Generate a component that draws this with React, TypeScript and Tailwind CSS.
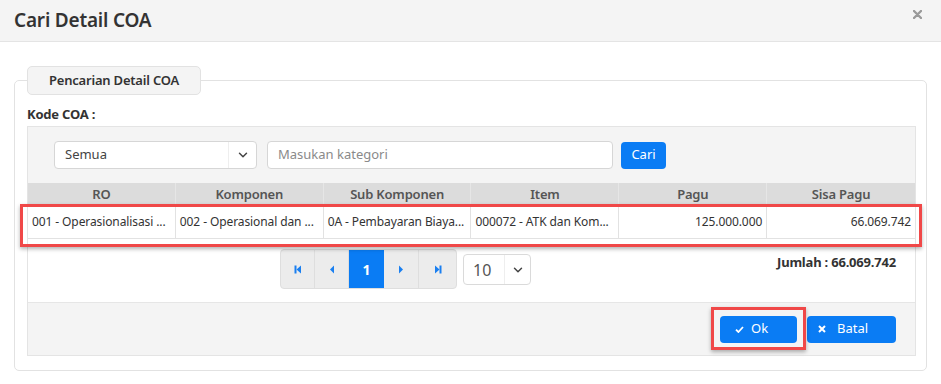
import { ChevronDown } from "lucide-react";

const columns = ["RO", "Komponen", "Sub Komponen", "Item", "Pagu", "Sisa Pagu"];

const row = [
  { text: "001 - Operasionalisasi ...", right: false },
  { text: "002 - Operasional dan ...", right: false },
  { text: "0A - Pembayaran Biaya...", right: false },
  { text: "000072 - ATK dan Kom...", right: false },
  { text: "125.000.000", right: true },
  { text: "66.069.742", right: true },
];

function PagerIcon({ kind }: { kind: "first" | "prev" | "next" | "last" }) {
  return (
    <svg width="8" height="9" viewBox="0 0 8 9" fill="#1a7ff0">
      {kind === "first" && (
        <>
          <rect x="0.5" y="0.5" width="2" height="8" />
          <path d="M7 0.5 L2.5 4.5 L7 8.5 Z" />
        </>
      )}
      {kind === "prev" && <path d="M6 0.5 L2 4.5 L6 8.5 Z" />}
      {kind === "next" && <path d="M2 0.5 L6 4.5 L2 8.5 Z" />}
      {kind === "last" && (
        <>
          <path d="M1 0.5 L5.5 4.5 L1 8.5 Z" />
          <rect x="5.5" y="0.5" width="2" height="8" />
        </>
      )}
    </svg>
  );
}

export default function App() {
  return (
    <div
      className="relative w-[941px] h-[384px] overflow-hidden bg-white text-[#333]"
      style={{ fontFamily: '"Noto Sans", "Open Sans", sans-serif' }}
    >
      {/* header */}
      <div className="h-[42px] bg-[#f4f4f4] border-b border-[#e4e4e4] flex items-center justify-between pl-[14px] pr-[19px]">
        <h1 className="text-[19px] font-semibold text-[#333] tracking-[-0.2px]">Cari Detail COA</h1>
        <svg width="9" height="9" viewBox="0 0 9 9" className="mt-[-12px]">
          <path d="M1 1 L8 8 M8 1 L1 8" stroke="#9a9a9a" strokeWidth="2.4" strokeLinecap="round" />
        </svg>
      </div>

      {/* body */}
      <div className="pt-[24px] px-[14px]">
        <fieldset className="border border-[#e2e2e2] rounded-[5px] pl-[12px] pr-[10px] pb-[14px]">
          <legend className="h-[29px] w-[174px] flex items-center justify-center bg-[#f4f4f4] border border-[#e2e2e2] rounded-[5px] text-[13px] font-semibold text-[#333] tracking-[-0.2px]">
            Pencarian Detail COA
          </legend>
          <div className="text-[13px] font-bold leading-[18px] mt-[10px] mb-[3px] tracking-[-0.2px]">Kode COA :</div>

          <div className="border border-[#e4e4e4] bg-[#f4f4f4]">
            {/* filter */}
            <div className="flex items-center pl-[26px] pt-[14px] pb-[14px]">
              <div className="w-[203px] h-[28px] bg-white border border-[#d6d6d6] rounded-[4px] flex items-center">
                <span className="flex-1 pl-[10px] text-[13px] text-[#444]">Semua</span>
                <span className="w-[28px] h-full border-l border-[#eeeeee] flex items-center justify-center">
                  <ChevronDown size={14} strokeWidth={2.5} color="#444" />
                </span>
              </div>
              <div className="ml-[10px] w-[346px] h-[28px] bg-white border border-[#d6d6d6] rounded-[4px] flex items-center pl-[10px] text-[13px] text-[#8a8a8a]">
                Masukan kategori
              </div>
              <button className="ml-[8px] w-[45px] h-[27px] bg-[#0a7cf4] rounded-[4px] text-white text-[13px]">Cari</button>
            </div>

            {/* table */}
            <div className="grid grid-cols-6 bg-[#dcdcdc] h-[23px]">
              {columns.map((c) => (
                <div
                  key={c}
                  className="flex items-center justify-center text-[13px] font-semibold text-[#555] border-r border-[#e6e6e6] last:border-r-0 tracking-[-0.2px]"
                >
                  {c}
                </div>
              ))}
            </div>
            <div className="grid grid-cols-6 bg-white h-[33px] border-b border-[#e2e2e2]">
              {row.map((cell, i) => (
                <div
                  key={i}
                  className={`flex items-center px-[4px] text-[12px] text-[#333] border-r border-[#e2e2e2] last:border-r-0 whitespace-nowrap tracking-[-0.1px] ${
                    cell.right ? "justify-end" : ""
                  }`}
                >
                  {cell.text}
                </div>
              ))}
            </div>

            {/* pagination */}
            <div className="bg-white h-[63px] flex items-start pl-[252px] pr-[19px] pt-[10px]">
              <div className="flex h-[40px] rounded-[4px] border border-[#dedede] bg-[#ececec]">
                <button className="w-[34px] flex items-center justify-center border-r border-[#dedede]">
                  <PagerIcon kind="first" />
                </button>
                <button className="w-[34px] flex items-center justify-center border-r border-[#dedede]">
                  <PagerIcon kind="prev" />
                </button>
                <button className="w-[35px] flex items-center justify-center bg-[#0a7cf4] text-white text-[14px] font-bold">
                  1
                </button>
                <button className="w-[35px] flex items-center justify-center border-r border-[#dedede]">
                  <PagerIcon kind="next" />
                </button>
                <button className="w-[37px] flex items-center justify-center">
                  <PagerIcon kind="last" />
                </button>
              </div>
              <div className="ml-[6px] mt-[5px] w-[68px] h-[31px] bg-white border border-[#dadada] rounded-[4px] flex items-center">
                <span className="w-[40px] pl-[9px] text-[16px] text-[#555]">10</span>
                <span className="flex-1 h-full border-l border-[#eeeeee] flex items-center justify-center">
                  <ChevronDown size={14} strokeWidth={2.5} color="#444" />
                </span>
              </div>
              <div className="ml-auto mt-[4px] text-[13px] font-bold text-[#333] tracking-[-0.2px]">Jumlah : 66.069.742</div>
            </div>

            {/* footer */}
            <div className="h-[53px] border-t border-[#e6e6e6] flex items-center justify-end gap-[10px] pr-[19px]">
              <button className="w-[77px] h-[27px] bg-[#0a7cf4] rounded-[4px] flex items-center pl-[15px] gap-[7px] text-white text-[13px]">
                <svg width="9" height="7" viewBox="0 0 9 7">
                  <path d="M1 3.6 L3.4 6 L8 1" fill="none" stroke="white" strokeWidth="1.8" />
                </svg>
                Ok
              </button>
              <button className="w-[89px] h-[27px] bg-[#0a7cf4] rounded-[4px] flex items-center pl-[11px] gap-[11px] text-white text-[13px]">
                <svg width="8" height="8" viewBox="0 0 8 8">
                  <path d="M1 1 L7 7 M7 1 L1 7" stroke="white" strokeWidth="2" />
                </svg>
                Batal
              </button>
            </div>
          </div>
        </fieldset>
      </div>

      {/* annotation highlights */}
      <div className="absolute left-[20px] top-[204px] w-[902px] h-[43px] border-[3px] border-[#f04848] shadow-[0_2px_4px_rgba(0,0,0,0.3)] pointer-events-none" />
      <div className="absolute left-[711px] top-[307px] w-[95px] h-[43px] border-[3px] border-[#f04848] shadow-[0_2px_4px_rgba(0,0,0,0.3)] pointer-events-none" />
    </div>
  );
}
